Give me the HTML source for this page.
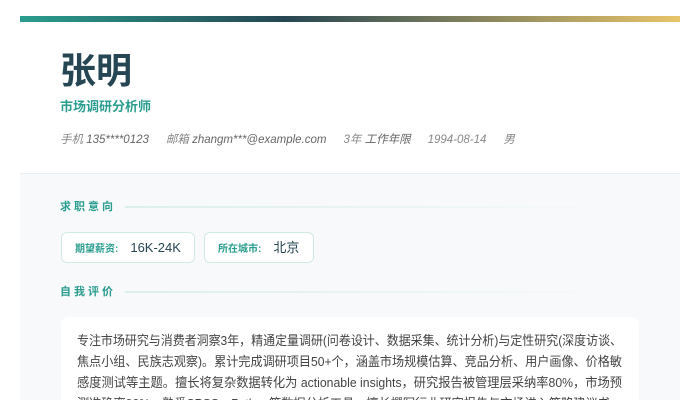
<!DOCTYPE html>
<html><head><meta charset="utf-8"><style>
*{margin:0;padding:0;box-sizing:border-box}
html,body{width:700px;height:400px;overflow:hidden}
body{background:#fff;font-family:"Liberation Sans","Noto Sans CJK SC",sans-serif;position:relative}
.card{position:absolute;left:20px;top:16px;width:660px;height:384px;background:#fff;overflow:hidden}
.bar{height:6px;background:linear-gradient(90deg,#2a9d8f 0%,#264653 40%,#e9c46a 100%)}
.name{position:absolute;left:40px;top:31px;font-size:36px;font-weight:bold;color:#264653;line-height:48px}
.title{position:absolute;left:40px;top:82px;font-size:13px;font-weight:bold;color:#2a9d8f;line-height:18px}
.meta{position:absolute;left:40px;top:116px;font-size:11.5px;font-style:italic;color:#888;white-space:nowrap;line-height:16px}
.meta span{margin-right:17px}.meta b{font-weight:normal;color:#666}
.gray{position:absolute;left:0;top:157px;width:660px;height:260px;background:#f7f9fa;border-top:1px solid #eceff2}
.sec{position:absolute;left:40px;font-size:11px;font-weight:bold;color:#2a9d8f;letter-spacing:3px;line-height:14px}
.line{position:absolute;left:105px;width:480px;height:2px;background:linear-gradient(90deg,#dcefec,rgba(220,239,236,0))}
.tag{position:absolute;top:216px;height:31px;border:1px solid #cfeae5;border-radius:6px;background:#fff;font-size:13px;color:#264653;line-height:29px;padding-left:13px}
.tag i{font-style:normal;font-size:10px;font-weight:bold;color:#2a9d8f;margin-right:12px}
.txt{position:absolute;left:41px;top:301px;width:578px;height:100px;background:#fff;border-radius:8px}
svg{position:absolute;left:0;top:0}
</style></head><body>
<div class="card">
<div class="bar"></div>
<div class="name">张明</div>
<div class="title">市场调研分析师</div>
<div class="meta"><span>手机 <b>135****0123</b></span><span>邮箱 <b>zhangm***@example.com</b></span><span>3年 <b>工作年限</b></span><span>1994-08-14</span><span>男</span></div>
<div class="gray"></div>
<div class="sec" style="top:184px">求职意向</div><div class="line" style="top:190px"></div>
<div class="tag" style="left:41px;width:134px"><i>期望薪资:</i>16K-24K</div>
<div class="tag" style="left:184px;width:110px"><i>所在城市:</i>北京</div>
<div class="sec" style="top:269px">自我评价</div><div class="line" style="top:275px"></div>
<div class="txt"></div>
</div>
<svg width="700" height="400" font-family="Liberation Sans, Noto Sans CJK SC, sans-serif" font-size="13" fill="#444">
<text x="77" y="345" textLength="545" lengthAdjust="spacingAndGlyphs">专注市场研究与消费者洞察3年，精通定量调研(问卷设计、数据采集、统计分析)与定性研究(深度访谈、</text>
<text x="77" y="366" textLength="545" lengthAdjust="spacingAndGlyphs">焦点小组、民族志观察)。累计完成调研项目50+个，涵盖市场规模估算、竞品分析、用户画像、价格敏</text>
<text x="77" y="387" textLength="545" lengthAdjust="spacingAndGlyphs">感度测试等主题。擅长将复杂数据转化为 actionable insights，研究报告被管理层采纳率80%，市场预</text>
<text x="77" y="408" textLength="545" lengthAdjust="spacingAndGlyphs">测准确率90%，熟悉SPSS、Python等数据分析工具，擅长撰写行业研究报告与市场进入策略建议书。</text>
</svg>
</body></html>
